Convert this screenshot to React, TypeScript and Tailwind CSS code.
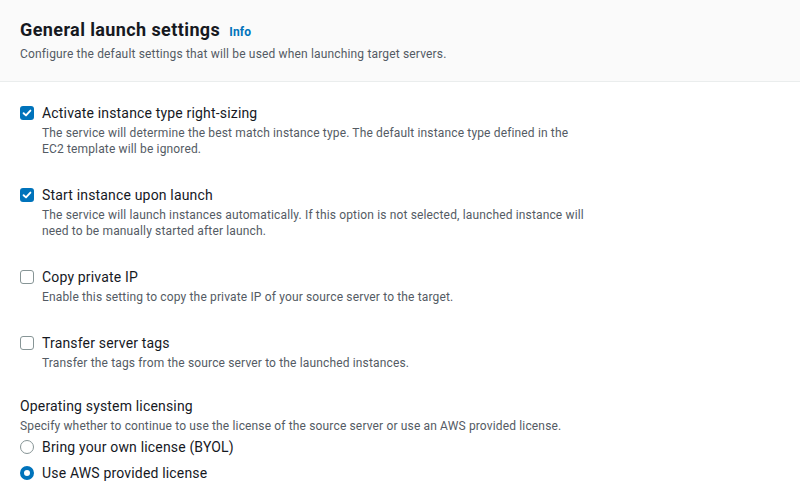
import { useState } from 'react';

type Option = {
  id: string;
  label: string;
  lines: string[];
  checked: boolean;
};

const OPTIONS: Option[] = [
  {
    id: 'rightsizing',
    label: 'Activate instance type right-sizing',
    lines: [
      'The service will determine the best match instance type. The default instance type defined in the',
      'EC2 template will be ignored.',
    ],
    checked: true,
  },
  {
    id: 'start',
    label: 'Start instance upon launch',
    lines: [
      'The service will launch instances automatically. If this option is not selected, launched instance will',
      'need to be manually started after launch.',
    ],
    checked: true,
  },
  {
    id: 'copyip',
    label: 'Copy private IP',
    lines: ['Enable this setting to copy the private IP of your source server to the target.'],
    checked: false,
  },
  {
    id: 'tags',
    label: 'Transfer server tags',
    lines: ['Transfer the tags from the source server to the launched instances.'],
    checked: false,
  },
];

function Checkbox({ checked, onToggle }: { checked: boolean; onToggle: () => void }) {
  return (
    <button
      onClick={onToggle}
      className={
        checked
          ? 'flex h-[14px] w-[14px] flex-shrink-0 items-center justify-center rounded-[3px] bg-[#0073bb]'
          : 'flex h-[14px] w-[14px] flex-shrink-0 items-center justify-center rounded-[3px] border border-[#879596] bg-white'
      }
    >
      {checked && (
        <svg width="10" height="10" viewBox="0 0 10 10" fill="none">
          <path d="M1.6 5.2 L4 7.4 L8.4 2.6" stroke="white" strokeWidth="1.9" strokeLinecap="round" strokeLinejoin="round" />
        </svg>
      )}
    </button>
  );
}

function Radio({ checked, onSelect }: { checked: boolean; onSelect: () => void }) {
  return (
    <button
      onClick={onSelect}
      className={
        checked
          ? 'h-[14px] w-[14px] flex-shrink-0 rounded-full border-[4px] border-[#0073bb] bg-white'
          : 'h-[14px] w-[14px] flex-shrink-0 rounded-full border border-[#879596] bg-white'
      }
    />
  );
}

export default function App() {
  const [checks, setChecks] = useState<Record<string, boolean>>(
    Object.fromEntries(OPTIONS.map((o) => [o.id, o.checked]))
  );
  const [license, setLicense] = useState<'byol' | 'aws'>('aws');

  return (
    <div
      className="h-[504px] w-[800px] overflow-hidden bg-white text-[#16191f]"
      style={{ fontFamily: 'Roboto, "Open Sans", sans-serif' }}
    >
      {/* Header */}
      <div className="border-b border-[#eaeded] bg-[#fafafa] px-5 pt-[19px] pb-[19px]">
        <div className="flex items-baseline gap-[9px]">
          <h2 className="text-[18px] font-bold leading-[22px] tracking-[0.4px]">General launch settings</h2>
          <a className="text-[12px] font-bold leading-[16px] tracking-[0.2px] text-[#0073bb]">Info</a>
        </div>
        <p className="mt-[5px] text-[12px] leading-[16px] tracking-[0.16px] text-[#545b64]">
          Configure the default settings that will be used when launching target servers.
        </p>
      </div>

      {/* Body */}
      <div className="px-5 pt-[21px]">
        <div className="flex flex-col gap-[28px]">
          {OPTIONS.map((o) => (
            <div key={o.id} className="flex gap-[8px]">
              <div className="flex h-[20px] items-center">
                <Checkbox
                  checked={checks[o.id]}
                  onToggle={() => setChecks({ ...checks, [o.id]: !checks[o.id] })}
                />
              </div>
              <div>
                <div className="text-[14px] leading-[20px] tracking-[0.17px]">{o.label}</div>
                <p className="mt-[2px] text-[12px] leading-[16px] tracking-[0.15px] text-[#545b64]">
                  {o.lines.map((l, i) => (
                    <span key={i} className="block">
                      {l}
                    </span>
                  ))}
                </p>
              </div>
            </div>
          ))}
        </div>

        <div className="mt-[25px]">
          <div className="text-[14px] leading-[20px] tracking-[0.17px]">Operating system licensing</div>
          <p className="mt-[2px] text-[12px] leading-[16px] tracking-[0.15px] text-[#545b64]">
            Specify whether to continue to use the license of the source server or use an AWS provided license.
          </p>
          <div className="mt-[3px] flex flex-col gap-[6px]">
            <label className="flex items-center gap-[8px]" onClick={() => setLicense('byol')}>
              <Radio checked={license === 'byol'} onSelect={() => setLicense('byol')} />
              <span className="text-[14px] leading-[20px] tracking-[0.17px]">Bring your own license (BYOL)</span>
            </label>
            <label className="flex items-center gap-[8px]" onClick={() => setLicense('aws')}>
              <Radio checked={license === 'aws'} onSelect={() => setLicense('aws')} />
              <span className="text-[14px] leading-[20px] tracking-[0.17px]">Use AWS provided license</span>
            </label>
          </div>
        </div>
      </div>
    </div>
  );
}
